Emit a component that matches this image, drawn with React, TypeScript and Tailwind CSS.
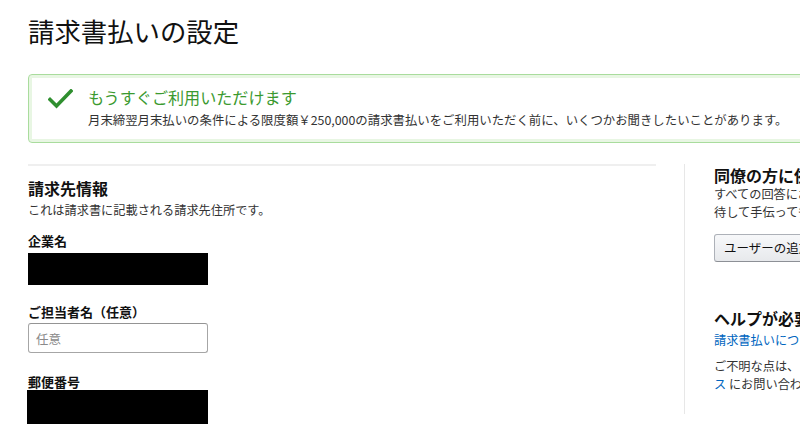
import React from "react";

const FONT = { fontFamily: "'Noto Sans CJK JP', 'Noto Sans', sans-serif" };

function CheckIcon() {
  return (
    <svg width="25" height="20" viewBox="0 0 25 20" className="shrink-0 mt-[2px]">
      <path d="M2 10.5 L8.5 17 L23 2" fill="none" stroke="#2f8f2f" strokeWidth="3.6" strokeLinecap="square" />
    </svg>
  );
}

function Label({ children, className = "" }: { children: React.ReactNode; className?: string }) {
  return <div className={`text-[13px] leading-[14px] font-bold text-[#111] ${className}`}>{children}</div>;
}

export default function App() {
  return (
    <div className="w-[800px] h-[427px] overflow-hidden bg-white text-[#111]" style={FONT}>
      <div className="w-[1060px] px-[28px]">
        <h1 className="pt-[14px] text-[26.4px] leading-[34px] font-normal text-[#111]">請求書払いの設定</h1>

        {/* success alert */}
        <div className="mt-[26px] rounded-[4px] border border-[#a9dc9d] shadow-[inset_0_0_0_3px_#e8f6e3] pl-[19px] pt-[12px] pb-[13px] flex gap-[15px]">
          <CheckIcon />
          <div>
            <div className="text-[16.1px] leading-[20px] text-[#3b9a2f]">もうすぐご利用いただけます</div>
            <div className="mt-[4px] text-[12.4px] leading-[18px] text-[#333]">
              月末締翌月末払いの条件による限度額￥250,000の請求書払いをご利用いただく前に、いくつかお聞きしたいことがあります。
            </div>
          </div>
        </div>

        <div className="mt-[21px] flex items-start">
          {/* billing info */}
          <div className="w-[628px] border-t-2 border-[#efefef]">
            <h2 className="mt-[11px] text-[16px] leading-[22px] font-bold text-[#111]">請求先情報</h2>
            <p className="mt-[2px] text-[12.2px] leading-[18px] text-[#333]">これは請求書に記載される請求先住所です。</p>

            <Label className="mt-[15px]">企業名</Label>
            <div className="mt-[5px] w-[180px] h-[32px] bg-black" />

            <Label className="mt-[20px]">ご担当者名（任意）</Label>
            <input
              placeholder="任意"
              className="mt-[4px] block w-[180px] h-[30px] rounded-[3px] border border-[#a6a6a6] border-t-[#949494] px-[7px] text-[12.5px] text-[#111] placeholder:text-[#8a8a8a] outline-none"
              style={FONT}
            />

            <Label className="mt-[22px]">郵便番号</Label>
            <div className="mt-[1px] w-[181px] -ml-[1px] h-[34px] bg-black" />
          </div>

          {/* side column */}
          <div className="ml-[28px] w-[300px] border-l border-[#e7e7e7] pl-[29px] pb-[21px] whitespace-nowrap">
            <h3 className="pt-[1px] text-[16px] leading-[20px] font-bold text-[#111]">同僚の方に依頼しますか？</h3>
            <p className="text-[12.2px] leading-[18px] text-[#333]">
              すべての回答にお答えいただけない場合は、同僚を招
              <br />
              待して手伝ってもらうことができます。
            </p>
            <button
              className="mt-[13px] h-[28px] px-[9px] rounded-[3px] border border-[#adb1b8] border-b-[#8d9096] bg-gradient-to-b from-[#f7f8fa] to-[#e7e9ec] text-[12.5px] text-[#111]"
              style={FONT}
            >
              ユーザーの追加
            </button>

            <h3 className="mt-[46px] text-[16px] leading-[20px] font-bold text-[#111]">ヘルプが必要ですか？</h3>
            <a className="block mt-[3px] text-[12.2px] leading-[18px] text-[#0066c0]">請求書払いについて詳しく見る</a>
            <p className="mt-[8px] text-[12.2px] leading-[18px] text-[#333]">
              ご不明な点は、<span className="text-[#0066c0]">アカウントサービ</span>
              <br />
              <span className="text-[#0066c0]">ス</span> にお問い合わせください。
            </p>
          </div>
        </div>
      </div>
    </div>
  );
}
